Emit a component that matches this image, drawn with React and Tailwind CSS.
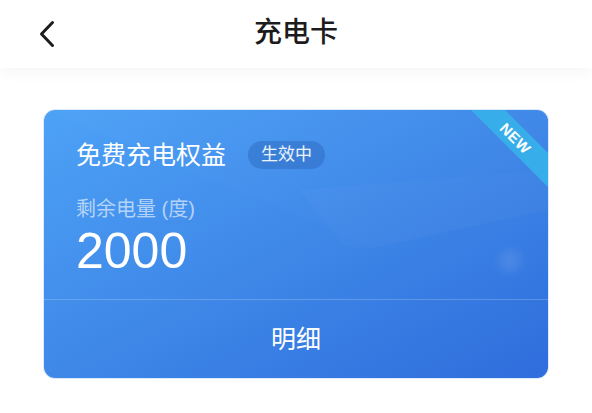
import React from 'react';

const font = { fontFamily: '"Liberation Sans", "Noto Sans CJK SC", sans-serif' };

function BackIcon() {
  return (
    <svg width="16" height="28" viewBox="0 0 16 28" fill="none">
      <polyline
        points="13.5,2.5 2.5,14 13.5,25.5"
        stroke="#1c1c1e"
        strokeWidth="3"
        strokeLinecap="round"
        strokeLinejoin="round"
      />
    </svg>
  );
}

function Header() {
  return (
    <header className="relative z-10 h-[68px] bg-white flex items-center shadow-[0_4px_14px_rgba(0,0,0,0.045)]">
      <div className="absolute left-[39px] top-[20px]">
        <BackIcon />
      </div>
      <h1 className="w-full text-center text-[28px] leading-[34px] font-medium text-[#1c1c1e] -mt-[2px]">
        充电卡
      </h1>
    </header>
  );
}

function Ribbon() {
  return (
    <div className="absolute right-[-36px] top-[16px] w-[136px] h-[24px] rotate-45 bg-[#37ade9] flex items-center justify-center">
      <span className="text-white text-[15px] font-bold tracking-[0.5px] leading-none">NEW</span>
    </div>
  );
}

function Decoration() {
  return (
    <>
      <svg className="absolute left-0 top-0" width="504" height="268" viewBox="0 0 504 268">
        <polygon points="255,80 504,60 504,100 330,138 300,136" fill="white" fillOpacity="0.02" />
        <polygon points="0,0 504,0 504,100 330,138" fill="white" fillOpacity="0.012" />
      </svg>
      <div className="absolute left-[455px] top-[140px] w-[22px] h-[22px] rounded-full bg-white/10 blur-[5px]" />
    </>
  );
}

function ChargeCard() {
  return (
    <div className="relative h-[268px] rounded-[11px] overflow-hidden bg-gradient-to-br from-[#4da2f6] via-[#3f88e8] to-[#2f6ddc] shadow-[0_0_0_1px_rgba(120,170,240,0.25)] flex flex-col">
      <Decoration />
      <Ribbon />
      <div className="relative h-[189px] pl-[32px] pt-[31px] text-white">
        <div className="flex items-center h-[28px]">
          <span className="text-[25px] leading-[28px]">免费充电权益</span>
          <span className="ml-[22px] h-[28px] px-[13px] rounded-full bg-[rgba(25,70,150,0.26)] text-[17px] leading-[28px] text-white/90">
            生效中
          </span>
        </div>
        <div className="mt-[28px] text-[20px] leading-[25px] text-white/60">剩余电量 (度)</div>
        <div className="mt-[4px] text-[50px] leading-[50px] font-normal">2000</div>
      </div>
      <div className="relative border-t border-white/20 flex-1 flex items-center justify-center">
        <span className="text-white text-[25px] leading-[30px]">明细</span>
      </div>
    </div>
  );
}

export default function App() {
  return (
    <div className="w-[592px] h-[413px] bg-white overflow-hidden" style={font}>
      <Header />
      <div className="px-[44px] pt-[42px]">
        <ChargeCard />
      </div>
    </div>
  );
}
